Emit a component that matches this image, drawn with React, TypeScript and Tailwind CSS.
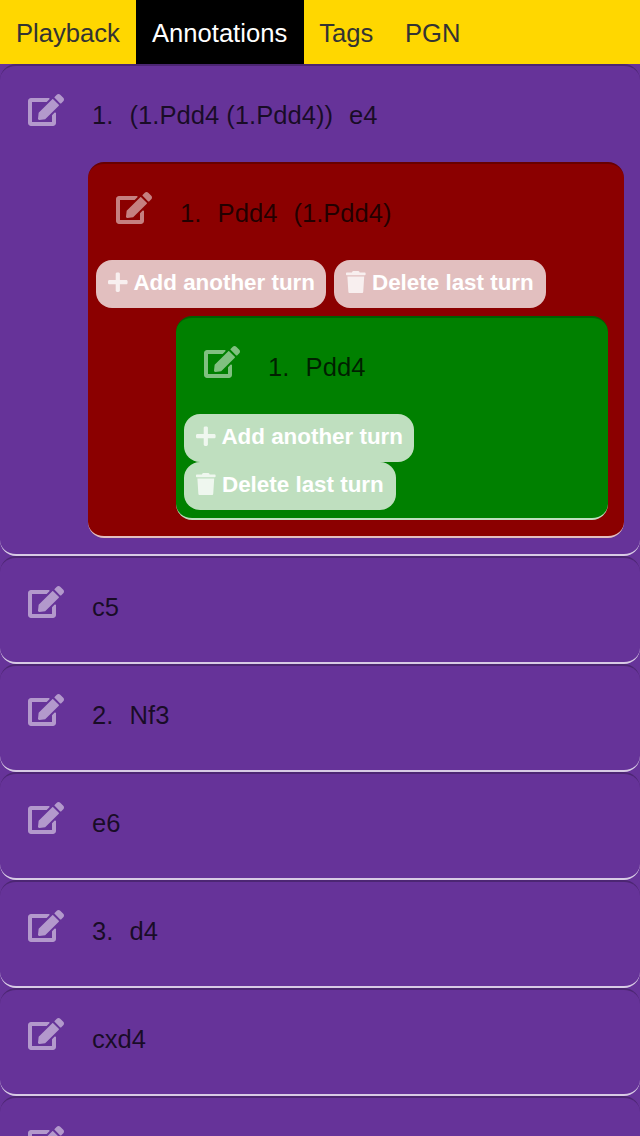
import type { ReactNode } from "react";
import { FaEdit, FaPlus, FaTrash } from "react-icons/fa";

const tabs = [
  { label: "Playback", className: "w-[136px] pl-4" },
  { label: "Annotations", className: "w-[168px] bg-black pl-4 text-white" },
  { label: "Tags", className: "w-[85px] pl-[15.2px]" },
  { label: "PGN", className: "pl-4" },
];

const panel =
  "rounded-2xl border-t-2 border-b-2 border-t-black/25 border-b-white/75";

function Moves({ parts }: { parts: string[] }) {
  return (
    <div className="flex h-24 items-start pl-7">
      <FaEdit className="mt-7 h-8 w-9 shrink-0 text-white/50" />
      <div className="ml-7 flex gap-4 pt-[33px] leading-8 whitespace-nowrap text-black/75">
        {parts.map((part, i) => (
          <span key={i} className={/^\d\.$/.test(part) ? "w-[21.6px]" : ""}>
            {part}
          </span>
        ))}
      </div>
    </div>
  );
}

function TurnButton({ icon, className, children }: { icon: ReactNode; className: string; children: ReactNode }) {
  return (
    <button
      className={`flex h-12 items-center rounded-2xl bg-white/75 pb-[3px] pl-3 text-[22.4px] font-bold whitespace-nowrap text-white ${className}`}
    >
      <span className="-mt-px shrink-0 text-white/75">{icon}</span>
      <span>{children}</span>
    </button>
  );
}

function TurnButtons() {
  return (
    <div className="flex flex-wrap gap-x-2 px-2 pb-2">
      <TurnButton className="w-[230px] gap-[5.8px]" icon={<FaPlus className="h-[22.4px] w-[19.6px]" />}>
        Add another turn
      </TurnButton>
      <TurnButton className="w-[212px] gap-[6.4px]" icon={<FaTrash className="h-[22.4px] w-[19.6px]" />}>
        Delete last turn
      </TurnButton>
    </div>
  );
}

export default function App() {
  return (
    <div className="flex h-[1136px] w-[640px] flex-col overflow-hidden bg-[#663399] font-['Liberation_Sans',Arial,sans-serif] text-[25.6px]">
      <nav className="flex h-16 shrink-0 bg-[#ffd700] text-[#333333]">
        {tabs.map(({ label, className }) => (
          <div key={label} className={`pt-[17px] leading-8 ${className}`}>
            {label}
          </div>
        ))}
      </nav>
      <main className="flex shrink-0 flex-col">
        <section className={`${panel} shrink-0 bg-[#663399]`}>
          <Moves parts={["1.", "(1.Pdd4 (1.Pdd4))", "e4"]} />
          <section className={`${panel} mr-4 mb-4 ml-22 bg-[#8b0000]`}>
            <Moves parts={["1.", "Pdd4", "(1.Pdd4)"]} />
            <TurnButtons />
            <section className={`${panel} mr-4 mb-4 ml-22 bg-[#008000]`}>
              <Moves parts={["1.", "Pdd4"]} />
              <TurnButtons />
            </section>
          </section>
        </section>
        {[["c5"], ["2.", "Nf3"], ["e6"], ["3.", "d4"], ["cxd4"], []].map((parts, i) => (
          <section key={i} className={`${panel} shrink-0 bg-[#663399] pb-2`}>
            <Moves parts={parts} />
          </section>
        ))}
      </main>
    </div>
  );
}
